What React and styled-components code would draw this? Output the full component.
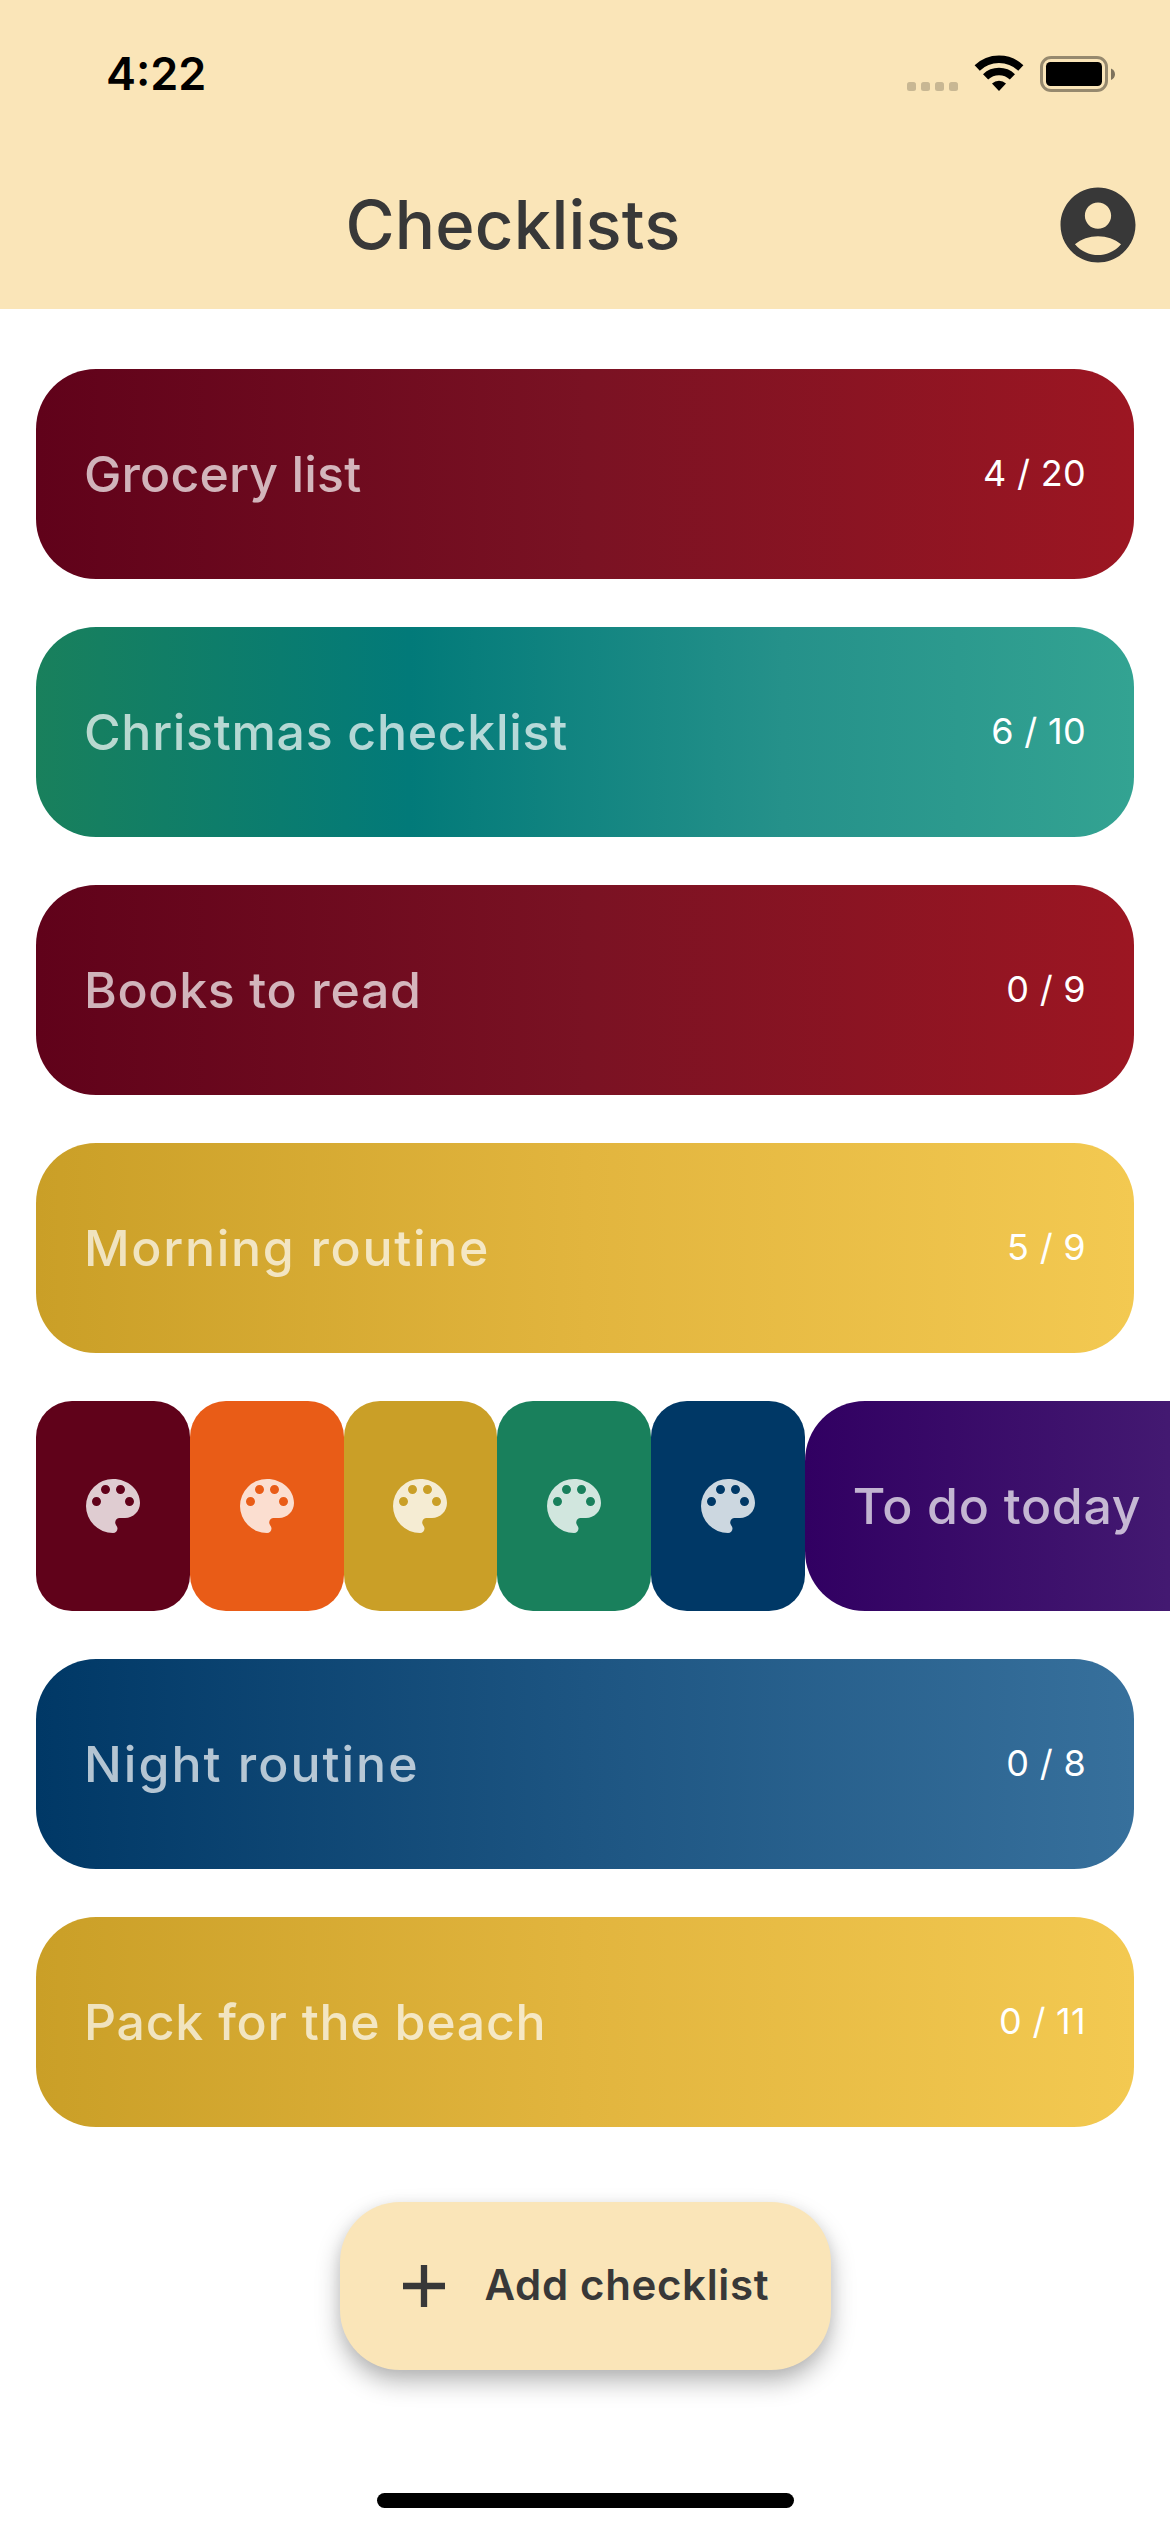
import React from "react";
import styled, { createGlobalStyle } from "styled-components";

const GlobalStyle = createGlobalStyle`
  * { box-sizing: border-box; }
  body { margin: 0; background: #fff; }
`;

const Screen = styled.div`
  width: 1170px;
  height: 2532px;
  display: flex;
  flex-direction: column;
  overflow: hidden;
  background: #ffffff;
  font-family: Inter, "Liberation Sans", sans-serif;
`;

const Header = styled.header`
  height: 309px;
  flex: none;
  background: #fae5b8;
  color: #383838;
`;

const StatusBar = styled.div`
  height: 141px;
  display: flex;
  justify-content: space-between;
  padding: 45px 54px 0 106px;
`;

const Time = styled.span`
  font-size: 45px;
  line-height: 58px;
  font-weight: 600;
  color: #000;
`;

const StatusIcons = styled.svg`
  display: block;
  width: 212px;
  height: 48px;
  margin-top: 5px;
`;

const TitleBar = styled.div`
  height: 168px;
  display: grid;
  grid-template-columns: 1fr 144px;
  align-items: center;
`;

const Title = styled.h1`
  margin: 0;
  text-align: center;
  font-size: 67px;
  line-height: 80px;
  font-weight: 500;
  letter-spacing: 0.2px;
`;

const AccountIcon = styled.svg`
  width: 90px;
  height: 90px;
  fill: #383838;
  justify-self: center;
`;

const List = styled.main`
  display: flex;
  flex-direction: column;
  gap: 48px;
  padding: 60px 36px 0;
`;

const Row = styled.div`
  display: flex;
  height: 210px;
`;

const Card = styled.div`
  flex: none;
  width: 1098px;
  height: 210px;
  display: flex;
  align-items: center;
  justify-content: space-between;
  padding: 0 48px;
  border-radius: 60px;
  background: linear-gradient(90deg, ${(p) => p.$stops});
`;

const CardName = styled.span`
  font-size: 50px;
  line-height: 60px;
  font-weight: 500;
  letter-spacing: ${(p) => p.$tracking}px;
  color: rgba(255, 255, 255, 0.7);
  white-space: nowrap;
`;

const Count = styled.span`
  padding-bottom: 3px;
  font-size: 36px;
  line-height: 44px;
  font-weight: 400;
  letter-spacing: 0.3px;
  color: #fff;
  white-space: nowrap;
`;

const Swatch = styled.button`
  flex: none;
  width: 153.75px;
  height: 210px;
  display: grid;
  place-items: center;
  padding: 0;
  border: 0;
  border-radius: 36px;
  background: ${(p) => p.$color};
`;

const PaletteIcon = styled.svg`
  width: 72px;
  height: 72px;
  fill: rgba(255, 255, 255, 0.8);
`;

const Footer = styled.footer`
  flex: 1;
  display: flex;
  flex-direction: column;
  align-items: center;
  justify-content: space-between;
  padding: 75px 0 24px;
`;

const AddButton = styled.button`
  width: 491px;
  height: 168px;
  display: flex;
  align-items: center;
  gap: 25px;
  padding: 0 0 0 48px;
  border: 0;
  border-radius: 60px;
  background: #fae5b8;
  color: #383838;
  box-shadow: 0 12px 24px rgba(0, 0, 0, 0.28), 0 2px 14px rgba(0, 0, 0, 0.06);
  font-family: inherit;
`;

const AddLabel = styled.span`
  padding-bottom: 3px;
  font-size: 42px;
  line-height: 50px;
  font-weight: 600;
  letter-spacing: 0.65px;
  white-space: nowrap;
`;

const PlusIcon = styled.svg`
  flex: none;
  width: 72px;
  height: 72px;
`;

const HomeIndicator = styled.div`
  width: 417px;
  height: 15px;
  border-radius: 8px;
  background: #000;
`;

const RED = "#60021a, #7a1223 50%, #9c1622";
const GREEN = "#19805c, #027a79 34%, #25918a 68%, #33a392";
const YELLOW = "#ca9f27, #e2b53e 50%, #f3c951";
const BLUE = "#003866, #1d5582 50%, #37709c";
const PURPLE = "#310062, #431971 33%, #673d92";

const CHECKLISTS = [
  { name: "Grocery list", count: "4 / 20", stops: RED, tracking: 0.15 },
  { name: "Christmas checklist", count: "6 / 10", stops: GREEN, tracking: 0.7 },
  { name: "Books to read", count: "0 / 9", stops: RED, tracking: 0.65 },
  { name: "Morning routine", count: "5 / 9", stops: YELLOW, tracking: 1.7 },
  {
    name: "To do today",
    stops: PURPLE,
    tracking: 0.7,
    swatches: ["#60021a", "#e95c17", "#ca9f27", "#19805c", "#003866"],
  },
  { name: "Night routine", count: "0 / 8", stops: BLUE, tracking: 2 },
  { name: "Pack for the beach", count: "0 / 11", stops: YELLOW, tracking: 0.75 },
];

function Palette() {
  return (
    <PaletteIcon viewBox="0 0 24 24">
      <path d="M12 3a9 9 0 0 0 0 18c.83 0 1.5-.67 1.5-1.5 0-.39-.15-.74-.39-1.01-.23-.26-.38-.61-.38-.99 0-.83.67-1.5 1.5-1.5H16c2.76 0 5-2.24 5-5 0-4.42-4.03-8-9-8zm-5.5 9c-.83 0-1.5-.67-1.5-1.5S5.67 9 6.5 9 8 9.67 8 10.5 7.33 12 6.5 12zm3-4C8.67 8 8 7.33 8 6.5S8.67 5 9.5 5s1.5.67 1.5 1.5S10.33 8 9.5 8zm5 0c-.83 0-1.5-.67-1.5-1.5S13.67 5 14.5 5s1.5.67 1.5 1.5S15.33 8 14.5 8zm3 4c-.83 0-1.5-.67-1.5-1.5S16.67 9 17.5 9s1.5.67 1.5 1.5-.67 1.5-1.5 1.5z" />
    </PaletteIcon>
  );
}

function SystemIcons() {
  return (
    <StatusIcons viewBox="904 50 212 48">
      <g fill="#000" fillOpacity="0.2">
        <rect x="907" y="82" width="9" height="9" rx="2.5" />
        <rect x="921" y="82" width="9" height="9" rx="2.5" />
        <rect x="935" y="82" width="9" height="9" rx="2.5" />
        <rect x="949" y="82" width="9" height="9" rx="2.5" />
      </g>
      <g fill="none" stroke="#000" strokeWidth="7.5">
        <path d="M977.2 68a31.5 31.5 0 0 1 43.6 0" />
        <path d="M985.6 76.900a19.5 19.5 0 0 1 26.800 0" />
      </g>
      <path d="M999 91l-7-7.500a10.2 10.2 0 0 1 14 0z" fill="#000" />
      <rect x="1041.5" y="57.5" width="65" height="33" rx="9.5" fill="none" stroke="#000" strokeOpacity="0.4" strokeWidth="3" />
      <rect x="1046" y="62" width="56" height="24" rx="4.5" fill="#000" />
      <path d="M1111 68.500c2.500 1 4 3.200 4 5.700s-1.500 4.700-4 5.700z" fill="#000" fillOpacity="0.5" />
    </StatusIcons>
  );
}

export default function App() {
  return (
    <Screen>
      <GlobalStyle />
      <Header>
        <StatusBar>
          <Time>4:22</Time>
          <SystemIcons />
        </StatusBar>
        <TitleBar>
          <Title>Checklists</Title>
          <AccountIcon viewBox="0 0 24 24">
            <path d="M12 2C6.48 2 2 6.48 2 12s4.48 10 10 10 10-4.48 10-10S17.52 2 12 2zm0 4c1.93 0 3.5 1.57 3.5 3.5S13.93 13 12 13s-3.5-1.57-3.5-3.5S10.07 6 12 6zm0 14c-2.03 0-4.43-.82-6.14-2.88C7.55 15.8 9.68 15 12 15s4.45.8 6.14 2.12C16.43 19.18 14.03 20 12 20z" />
          </AccountIcon>
        </TitleBar>
      </Header>
      <List>
        {CHECKLISTS.map((item) => (
          <Row key={item.name}>
            {item.swatches?.map((color) => (
              <Swatch key={color} $color={color}>
                <Palette />
              </Swatch>
            ))}
            <Card $stops={item.stops}>
              <CardName $tracking={item.tracking}>{item.name}</CardName>
              {item.count && <Count>{item.count}</Count>}
            </Card>
          </Row>
        ))}
      </List>
      <Footer>
        <AddButton>
          <PlusIcon viewBox="0 0 24 24">
            <path d="M12 5v14M5 12h14" stroke="#383838" strokeWidth="2.1" />
          </PlusIcon>
          <AddLabel>Add checklist</AddLabel>
        </AddButton>
        <HomeIndicator />
      </Footer>
    </Screen>
  );
}
